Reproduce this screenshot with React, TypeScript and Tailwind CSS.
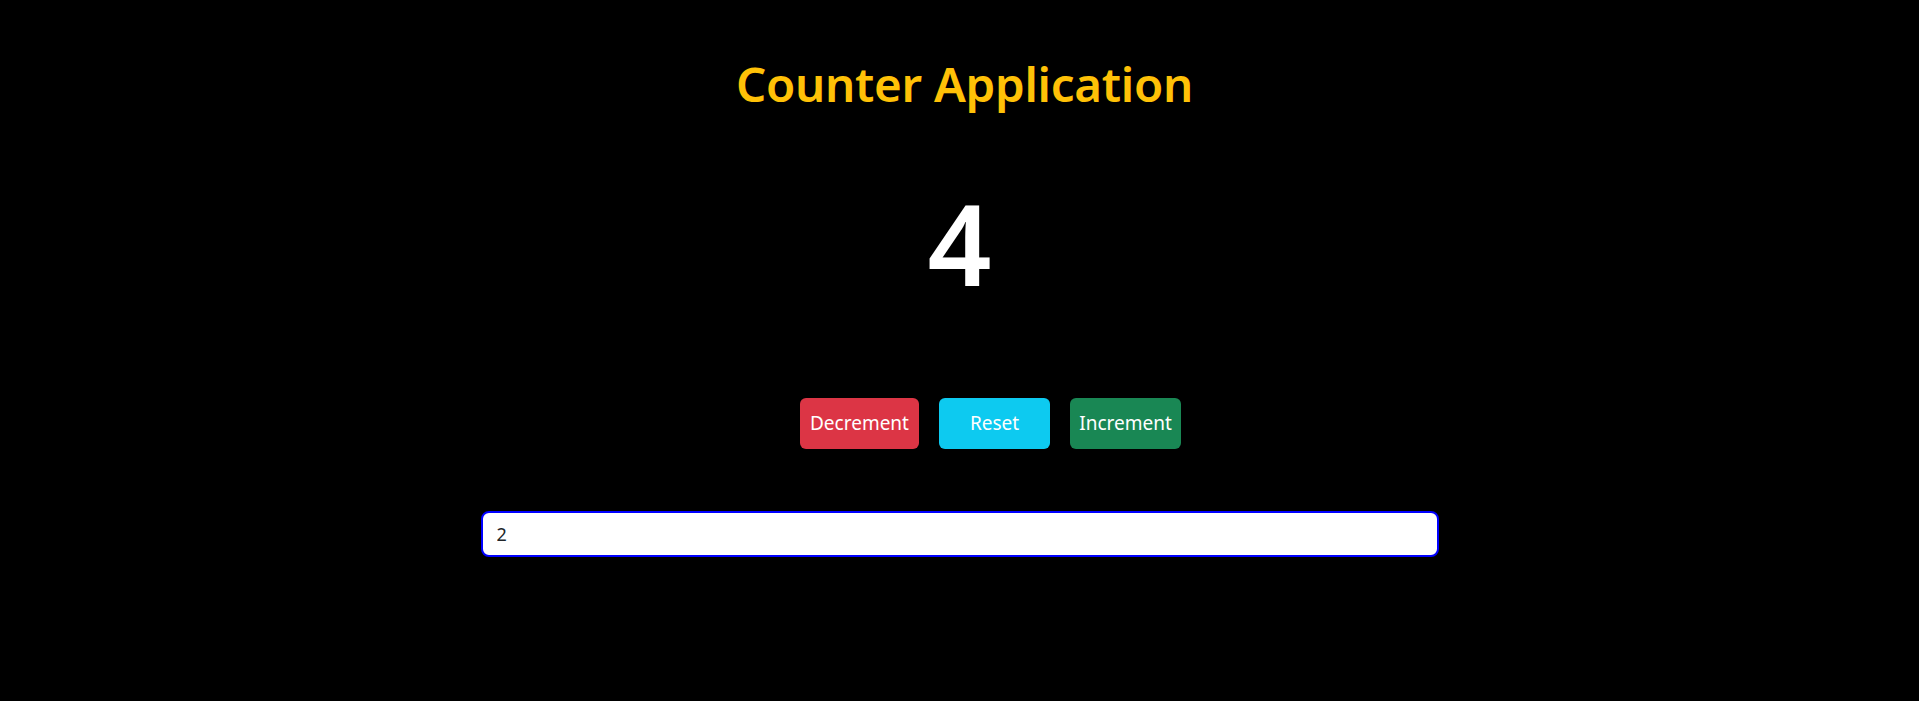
import { useState } from 'react'

export default function App() {
  const [count, setCount] = useState(4)
  const [step, setStep] = useState('2')

  const n = Number(step) || 0

  return (
    <div className="min-h-[701px] w-full bg-black flex flex-col items-center font-['Noto_Sans',_sans-serif]">
      {/* Title */}
      <h1 className="mt-[54px] ml-[10px] text-[47.5px] leading-[60px] font-semibold text-[#ffc107] tracking-[-0.3px]">
        Counter Application
      </h1>

      {/* Value */}
      <div className="mt-[64px] text-[112px] leading-[130px] font-semibold text-white">
        {count}
      </div>

      {/* Buttons */}
      <div className="mt-[90px] ml-[62px] flex gap-[20px]">
        <button
          onClick={() => setCount(c => c - n)}
          className="w-[119px] h-[51px] rounded-[6px] bg-[#dc3545] text-white text-[19px]"
        >
          Decrement
        </button>
        <button
          onClick={() => setCount(0)}
          className="w-[111px] h-[51px] rounded-[6px] bg-[#0dcaf0] text-white text-[19px]"
        >
          Reset
        </button>
        <button
          onClick={() => setCount(c => c + n)}
          className="w-[111px] h-[51px] rounded-[6px] bg-[#198754] text-white text-[19px]"
        >
          Increment
        </button>
      </div>

      {/* Step input */}
      <input
        value={step}
        onChange={e => setStep(e.target.value)}
        className="mt-[62px] w-[958px] h-[46px] rounded-[8px] border-2 border-[#0000ff] bg-white px-[14px] text-[18px] text-[#212529] outline-none"
      />
    </div>
  )
}
